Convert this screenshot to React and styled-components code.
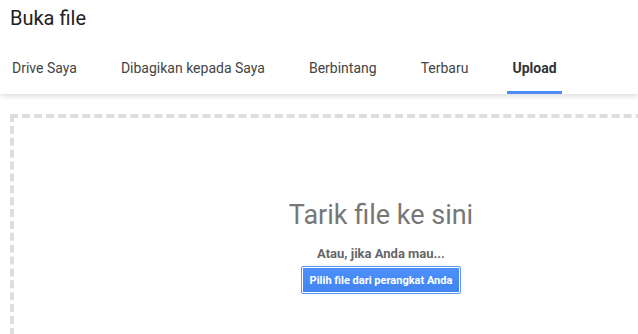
import React, { useState } from 'react';
import styled, { createGlobalStyle } from 'styled-components';

const GlobalStyle = createGlobalStyle`
  html, body {
    margin: 0;
    padding: 0;
    background: #fff;
    overflow: hidden;
  }
  body {
    font-family: Roboto, 'Liberation Sans', Arial, sans-serif;
  }
`;

const Page = styled.div`
  width: 638px;
  height: 334px;
  overflow: hidden;
`;

const Header = styled.header`
  position: relative;
  z-index: 1;
  background: #fff;
  box-shadow: 0 2px 5px rgba(0, 0, 0, 0.14);
`;

const Title = styled.h1`
  margin: 0;
  padding: 6px 10px 0;
  height: 38px;
  font-size: 20px;
  line-height: 24px;
  font-weight: 400;
  color: #222;
`;

const Tabs = styled.nav`
  display: flex;
  gap: 34px;
  padding-left: 7px;
`;

const Tab = styled.div`
  padding: 14px 5px 13px;
  font-size: 14px;
  line-height: 20px;
  font-weight: ${p => (p.$active ? 700 : 400)};
  color: ${p => (p.$active ? '#333' : '#444')};
  border-bottom: 3px solid ${p => (p.$active ? '#4d8cf5' : 'transparent')};
  cursor: pointer;
  white-space: nowrap;
`;

const DropZone = styled.div`
  margin: 20px 0 0 10px;
  width: 742px;
  height: 400px;
  box-sizing: border-box;
  border: 4px dashed #dedede;
  display: flex;
  flex-direction: column;
  align-items: center;
  padding-top: 81px;
`;

const DropTitle = styled.div`
  font-size: 27px;
  line-height: 32px;
  color: #777;
`;

const OrText = styled.div`
  margin-top: 15px;
  font-size: 13px;
  line-height: 16px;
  font-weight: 700;
  color: #666;
`;

const PickButton = styled.button`
  margin-top: 4px;
  height: 28px;
  padding: 0 8px;
  border: 1px solid #5d98f6;
  border-radius: 2px;
  background: linear-gradient(#4d90fe, #4284ee);
  box-shadow: inset 0 0 0 1px #fff;
  color: #fff;
  font-family: Roboto, 'Liberation Sans', Arial, sans-serif;
  font-size: 11px;
  font-weight: 700;
  cursor: pointer;
`;

const tabs = ['Drive Saya', 'Dibagikan kepada Saya', 'Berbintang', 'Terbaru', 'Upload'];

export default function App() {
  const [active, setActive] = useState('Upload');

  return (
    <Page>
      <GlobalStyle />
      <Header>
        <Title>Buka file</Title>
        <Tabs>
          {tabs.map(t => (
            <Tab key={t} $active={t === active} onClick={() => setActive(t)}>
              {t}
            </Tab>
          ))}
        </Tabs>
      </Header>
      <DropZone>
        <DropTitle>Tarik file ke sini</DropTitle>
        <OrText>Atau, jika Anda mau...</OrText>
        <PickButton>Pilih file dari perangkat Anda</PickButton>
      </DropZone>
    </Page>
  );
}
